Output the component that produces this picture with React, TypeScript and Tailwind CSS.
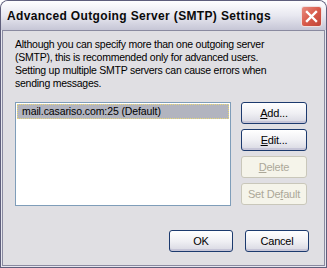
import React from "react";

const Btn = ({ children, disabled, className = "" }: { children: React.ReactNode; disabled?: boolean; className?: string }) => (
  <div
    className={
      "flex items-center justify-center rounded-[3px] border text-[11px] leading-none " +
      (disabled
        ? "border-[#c9c7ba] bg-[#f5f4ea] text-[#aca899] "
        : "border-[#1c3a6e] bg-gradient-to-b from-[#ffffff] via-[#f0f0f4] to-[#d8d8e2] text-black shadow-[inset_0_-2px_0_#c6c5d7] ") +
      className
    }
    style={{ letterSpacing: "-0.2px" }}
  >
    {children}
  </div>
);

export default function App() {
  return (
    <div
      className="w-[327px] h-[268px] bg-[#5f5f7c] rounded-t-[8px] p-px flex flex-col"
      style={{ fontFamily: '"Liberation Sans", Arial, sans-serif' }}
    >
      <div className="flex-1 flex flex-col rounded-t-[7px] bg-[#e6e6ee]">
        {/* title bar */}
        <div className="h-[29px] rounded-t-[7px] bg-gradient-to-b from-[#ffffff] via-[#e8e8f0] to-[#c6c6d6] flex items-center pl-[6px] pr-[4px]">
          <div className="flex-1 whitespace-nowrap text-[12px] font-bold text-[#0a0a0a] tracking-[0.35px]">
            Advanced Outgoing Server (SMTP) Settings
          </div>
          <div className="w-[21px] h-[21px] rounded-[3px] border border-[#f0e0e0] bg-gradient-to-br from-[#e88c80] via-[#d85a4a] to-[#c0453a] flex items-center justify-center mt-[2px]">
            <svg width="13" height="13" viewBox="0 0 13 13">
              <path d="M2 2 L11 11 M11 2 L2 11" stroke="#fff" strokeWidth="2.4" strokeLinecap="square" />
            </svg>
          </div>
        </div>
        {/* client with frame */}
        <div className="flex-1 mx-px mb-px border border-[#8a8aa0] bg-[#e0dfe3] flex flex-col">
          <div className="pl-[12px] pt-[7px] text-[10.5px] leading-[13px] tracking-[-0.25px] text-black whitespace-nowrap">
            Although you can specify more than one outgoing server
            <br />
            (SMTP), this is recommended only for advanced users.
            <br />
            Setting up multiple SMTP servers can cause errors when
            <br />
            sending messages.
          </div>
          <div className="flex pl-[12px] pt-[12px] gap-[10px]">
            <div className="w-[216px] h-[104px] border border-[#7f9db9] bg-white p-px">
              <div className="h-[15px] bg-[#b2b4bf] border border-dotted border-[#e8d878] flex items-center pl-[4px] text-[10.5px] tracking-[-0.1px] text-black">
                mail.casariso.com:25 (Default)
              </div>
            </div>
            <div className="flex flex-col gap-[5px]">
              <Btn className="w-[66px] h-[22px]"><span><u>A</u>dd...</span></Btn>
              <Btn className="w-[66px] h-[22px]"><span><u>E</u>dit...</span></Btn>
              <Btn disabled className="w-[66px] h-[22px]"><span><u>D</u>elete</span></Btn>
              <Btn disabled className="w-[66px] h-[22px]"><span>Set De<u>f</u>ault</span></Btn>
            </div>
          </div>
          <div className="flex justify-end gap-[12px] pr-[15px] pt-[24px]">
            <Btn className="w-[64px] h-[22px]">OK</Btn>
            <Btn className="w-[64px] h-[22px]">Cancel</Btn>
          </div>
        </div>
      </div>
    </div>
  );
}
